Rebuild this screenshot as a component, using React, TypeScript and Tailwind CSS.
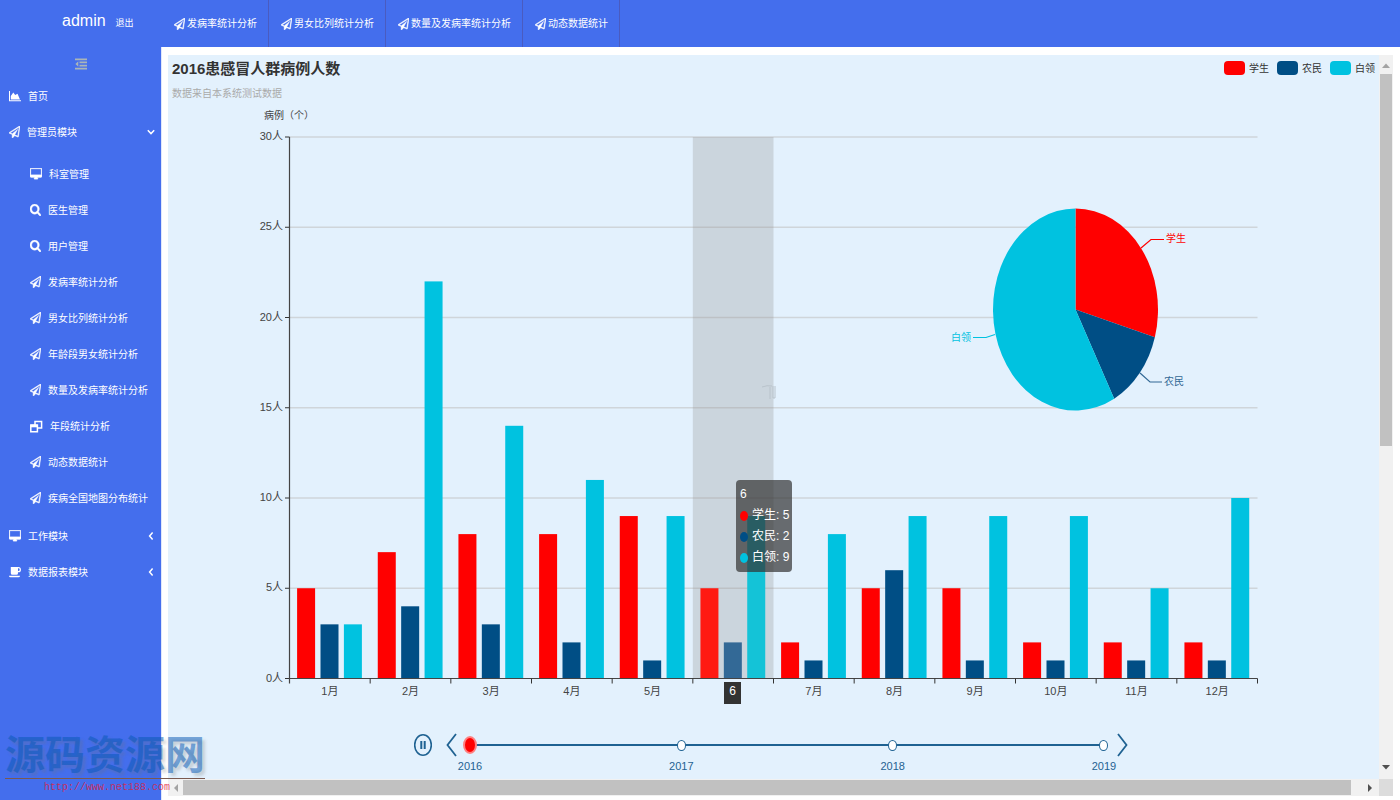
import type { ReactNode } from "react";

type IconProps = { className?: string };

function PlaneIcon({ className = "h-3 w-[11px]" }: IconProps) {
  return (
    <svg className={className} viewBox="0 0 1792 1792" preserveAspectRatio="none" fill="currentColor" stroke="currentColor" strokeWidth="70" aria-hidden="true">
      <path d="M1764 11q33 24 27 64l-256 1536q-5 29-32 45-14 8-31 8-11 0-24-5l-527-215-298 327q-18 21-47 21-14 0-23-4-19-7-30-23.5t-11-36.5v-452l-472-193q-37-14-40-55-3-39 32-59l1664-960q35-21 68 2zm-342 1499l221-1323-1434 827 336 137 863-639-478 797z" />
    </svg>
  );
}

function DesktopIcon({ className = "h-3 w-3" }: IconProps) {
  return (
    <svg className={className} viewBox="0 0 1920 1792" preserveAspectRatio="none" fill="currentColor" stroke="currentColor" strokeWidth="50" aria-hidden="true">
      <path d="M1792 992v-832q0-13-9.5-22.5t-22.5-9.5h-1600q-13 0-22.5 9.5t-9.5 22.5v832q0 13 9.5 22.5t22.5 9.5h1600q13 0 22.5-9.5t9.5-22.5zm128-832v1088q0 66-47 113t-113 47h-544q0 37 16 77.5t32 71 16 43.5q0 26-19 45t-45 19h-512q-26 0-45-19t-19-45q0-14 16-44t32-70 16-78h-544q-66 0-113-47t-47-113v-1088q0-66 47-113t113-47h1600q66 0 113 47t47 113z" />
    </svg>
  );
}

function SearchIcon({ className = "h-3 w-[11px]" }: IconProps) {
  return (
    <svg className={className} viewBox="64 128 1664 1664" preserveAspectRatio="none" fill="currentColor" stroke="currentColor" strokeWidth="60" aria-hidden="true">
      <path d="M1216 832q0-185-131.5-316.5t-316.5-131.5-316.5 131.5-131.5 316.5 131.5 316.5 316.5 131.5 316.5-131.5 131.5-316.5zm512 832q0 52-38 90t-90 38q-54 0-90-38l-343-342q-179 124-399 124-143 0-273.5-55.5t-225-150-150-225-55.5-273.5 55.5-273.5 150-225 225-150 273.5-55.5 273.5 55.5 225 150 150 225 55.5 273.5q0 220-124 399l343 343q37 37 37 90z" />
    </svg>
  );
}

function AreaIcon({ className = "h-3 w-3" }: IconProps) {
  return (
    <svg className={className} viewBox="0 0 12 12" fill="currentColor" aria-hidden="true">
      <path d="M0 1h1v9.2h11v1H0zM1.8 9.5V6L4.3 2.6 6.2 5l2.3-1.2L11 9.5z" />
    </svg>
  );
}

function CloneIcon({ className = "h-[13px] w-[13px]" }: IconProps) {
  return (
    <svg className={className} viewBox="0 0 13 13" fill="none" stroke="currentColor" aria-hidden="true">
      <path d="M5 5V1.5h6.600v6.600H8" strokeWidth="1.500" />
      <path d="M.8 5h6.600v6.800H.8z" strokeWidth="1.500" />
      <path d="M.8 6h6.600" strokeWidth="2.600" />
    </svg>
  );
}

function CoffeeIcon({ className = "h-3 w-3" }: IconProps) {
  return (
    <svg className={className} viewBox="0 0 12 12" fill="currentColor" aria-hidden="true">
      <path d="M1.8 1H9.4a2.5 2.6 0 0 1 0 5.3H9V7.2q0 1.6-1.5 1.6H3.4Q1.8 8.8 1.8 7.2zM9 2.3v2.7h.4a1.3 1.35 0 0 0 0-2.7z" fillRule="evenodd" />
      <path d="M0 9.7h11q0 1.5-1.5 1.5h-8Q0 11.2 0 9.7z" />
    </svg>
  );
}

function OutdentIcon() {
  return (
    <svg className="h-3 w-3" viewBox="0 0 12 12" fill="currentColor" aria-hidden="true">
      <path d="M0 .5h12v1.7H0zM4.5 3.6H12v1.7H4.5zM4.5 6.7H12v1.7H4.5zM0 9.8h12v1.7H0zM3.3 3.3v5.4L.4 6z" />
    </svg>
  );
}

function Chevron({ open }: { open?: boolean }) {
  return (
    <svg className="h-2 w-2" viewBox="0 0 8 8" fill="none" stroke="currentColor" strokeWidth="1.5" aria-hidden="true">
      <path d={open ? "M.8 2.2L4 5.6 7.2 2.2" : "M5.6.6L2.6 4l3 3.4"} />
    </svg>
  );
}

const tabs = ["发病率统计分析", "男女比列统计分析", "数量及发病率统计分析", "动态数据统计"];

const subItems: { label: string; icon: ReactNode }[] = [
  { label: "科室管理", icon: <DesktopIcon /> },
  { label: "医生管理", icon: <SearchIcon /> },
  { label: "用户管理", icon: <SearchIcon /> },
  { label: "发病率统计分析", icon: <PlaneIcon /> },
  { label: "男女比列统计分析", icon: <PlaneIcon /> },
  { label: "年龄段男女统计分析", icon: <PlaneIcon /> },
  { label: "数量及发病率统计分析", icon: <PlaneIcon /> },
  { label: "年段统计分析", icon: <CloneIcon /> },
  { label: "动态数据统计", icon: <PlaneIcon /> },
  { label: "疾病全国地图分布统计", icon: <PlaneIcon /> },
];

function TopBar() {
  return (
    <header className="flex h-[47px] shrink-0 bg-[#446eed] text-white">
      <div className="flex w-[161px] shrink-0 items-baseline pl-[62px] pt-[9px]">
        <span className="text-[16px] leading-6">admin</span>
        <a href="#logout" className="ml-[10px] text-[9px]">
          退出
        </a>
      </div>
      <nav className="flex pl-px">
        {tabs.map((t) => (
          <a
            key={t}
            href="#tab"
            className="flex items-center gap-[2px] whitespace-nowrap border-r border-[#4a5bc0] pl-3 pr-[11px] text-[10px]"
          >
            <PlaneIcon />
            {t}
          </a>
        ))}
      </nav>
    </header>
  );
}

function MenuRow({ icon, label, arrow }: { icon: ReactNode; label: string; arrow?: ReactNode }) {
  return (
    <a href="#menu" className="flex h-9 items-center gap-[7px] pl-[9px] pr-[6px]">
      {icon}
      <span className="flex-1 whitespace-nowrap">{label}</span>
      {arrow}
    </a>
  );
}

function Sidebar() {
  return (
    <aside className="w-[161px] shrink-0 bg-[#446eed] text-[10px] text-white">
      <div className="flex h-[31px] items-center justify-center pt-[3px]">
        <button type="button" aria-label="菜单" className="text-[#aab5b8]">
          <OutdentIcon />
        </button>
      </div>
      <nav>
        <MenuRow icon={<AreaIcon />} label="首页" />
        <MenuRow icon={<PlaneIcon />} label="管理员模块" arrow={<Chevron open />} />
        <ul className="pb-[2px] pt-[6px]">
          {subItems.map((s) => (
            <li key={s.label}>
              <a href="#item" className="flex h-9 items-center gap-[7px] whitespace-nowrap pl-[30px]">
                {s.icon}
                {s.label}
              </a>
            </li>
          ))}
        </ul>
        <MenuRow icon={<DesktopIcon />} label="工作模块" arrow={<Chevron />} />
        <MenuRow icon={<CoffeeIcon />} label="数据报表模块" arrow={<Chevron />} />
      </nav>
    </aside>
  );
}

const series = [
  { name: "学生", color: "#ff0000", hover: "#ff1a12", values: [5, 7, 8, 8, 9, 5, 2, 5, 5, 2, 2, 2] },
  { name: "农民", color: "#004e85", hover: "#336996", values: [3, 4, 3, 2, 1, 2, 1, 6, 1, 1, 1, 1] },
  { name: "白领", color: "#00c2e0", hover: "#14c3d7", values: [3, 22, 14, 11, 9, 9, 8, 9, 9, 9, 5, 10] },
];

const swatches = ["bg-[#ff0000]", "bg-[#004e85]", "bg-[#00c2e0]"];

const LEFT = 121.5;
const RIGHT = 1089.5;
const TOP = 32;
const BASE = 573.5;
const STEP = (RIGHT - LEFT) / 12;
const UNIT = (BASE - TOP) / 30;
const ACTIVE = 5;
const months = Array.from({ length: 12 }, (_, i) => i);

const PIE = { x: 907.5, y: 204.5, rx: 82.5, ry: 101 };

function slice(from: number, to: number) {
  const at = (f: number) => {
    const a = f * Math.PI * 2;
    return `${(PIE.x + PIE.rx * Math.sin(a)).toFixed(2)} ${(PIE.y - PIE.ry * Math.cos(a)).toFixed(2)}`;
  };
  return `M${PIE.x} ${PIE.y}L${at(from)}A${PIE.rx} ${PIE.ry} 0 ${to - from > 0.5 ? 1 : 0} 1 ${at(to)}Z`;
}

function Chart() {
  return (
    <svg viewBox="0 0 1211 610" className="block h-auto w-full" fontSize="11" role="img" aria-label="病例">
      <text x="96" y="14" fill="#444" fontSize="10">
        病例（个）
      </text>
      {[0, 5, 10, 15, 20, 25, 30].map((v) => {
        const y = BASE - v * UNIT;
        return (
          <g key={v}>
            {v > 0 && <path d={`M${LEFT} ${y}H${RIGHT}`} stroke="#cfd5da" strokeWidth="1.6" />}
            <path d={`M117 ${y}H${LEFT}`} stroke="#333" />
            <text x="115" y={y + 3} textAnchor="end" fill="#444">
              {v}人
            </text>
          </g>
        );
      })}
      <rect x={LEFT + ACTIVE * STEP} y={TOP} width={STEP} height={BASE - TOP} fill="#969696" fillOpacity=".3" />
      <path d="M594 282q5-2 10-1M602 282v12M605 281v12h2v-12" stroke="#b9c3cb" fill="none" />
      {series.map((s, k) =>
        s.values.map((v, i) => (
          <rect
            key={`${s.name}${i}`}
            x={LEFT + i * STEP + 7.6 + k * 23.4}
            y={BASE - v * UNIT}
            width="18"
            height={v * UNIT}
            fill={i === ACTIVE ? s.hover : s.color}
          />
        )),
      )}
      <path d={`M${LEFT} ${TOP}V${BASE + 5}M${LEFT} ${BASE}H${RIGHT}`} stroke="#444" strokeWidth="1.2" fill="none" />
      {months.map((i) => (
        <g key={i}>
          <path d={`M${LEFT + (i + 1) * STEP} ${BASE}v5`} stroke="#333" />
          {i !== ACTIVE && (
            <text x={LEFT + (i + 0.5) * STEP} y={BASE + 16} textAnchor="middle" fill="#444">
              {i + 1}月
            </text>
          )}
        </g>
      ))}
      <rect x="556" y="577" width="17" height="22" fill="#333" />
      <text x="564.5" y="590" textAnchor="middle" fill="#fff" fontSize="12">
        6
      </text>
      <path d={slice(0, 0.2941)} fill="#ff0000" />
      <path d={slice(0.2941, 0.4223)} fill="#004e85" />
      <path d={slice(0.4223, 1)} fill="#00c2e0" />
      <g fill="none" strokeWidth="1.2">
        <path d="M973 143l10-8.500h13" stroke="#ff0000" />
        <path d="M972 268l10 9h12" stroke="#336996" />
        <path d="M827 229.500l-9 3h-13" stroke="#00c2e0" />
      </g>
      <g fontSize="10">
        <text x="998" y="137" fill="#ff0000">学生</text>
        <text x="996" y="280" fill="#336996">农民</text>
        <text x="783" y="236" fill="#00c2e0">白领</text>
      </g>
    </svg>
  );
}

function Tooltip() {
  return (
    <div className="absolute left-[46.9%] top-[61.5%] whitespace-nowrap rounded bg-[#323232]/70 py-1 pl-1 pr-[3px] text-[12px] leading-[21px] text-white">
      <div>6</div>
      {series.map((s, k) => (
        <div key={s.name} className="flex items-center gap-1">
          <span className={`h-[10px] w-2 rounded-[50%] ${swatches[k]}`} />
          {s.name}: {s.values[ACTIVE]}
        </div>
      ))}
    </div>
  );
}

function Timeline() {
  return (
    <div className="flex items-start pl-[246px] pr-[251px] pt-5 text-[#1f6292]">
      <button type="button" aria-label="暂停" className="mr-3 flex h-5 w-5 shrink-0 items-center">
        <svg className="h-[22px] w-[18px] shrink-0" viewBox="0 0 18 22" fill="none" stroke="currentColor" aria-hidden="true">
          <ellipse cx="9" cy="11" rx="8.3" ry="10.2" strokeWidth="1.6" />
          <path d="M7.3 7v8M10.7 7v8" strokeWidth="2" />
        </svg>
      </button>
      <button type="button" aria-label="上一年" className="flex h-5 w-3 shrink-0 items-center">
        <svg className="h-6 w-3 shrink-0" viewBox="0 0 12 24" fill="none" stroke="currentColor" strokeWidth="1.8" aria-hidden="true">
          <path d="M10 1L1.5 12 10 23" />
        </svg>
      </button>
      <div className="relative flex flex-1 justify-between">
        <div className="absolute left-3 right-3 top-[9px] h-[2px] bg-[#1f6292]" />
        {[2016, 2017, 2018, 2019].map((y, i) => (
          <button key={y} type="button" className="relative flex w-6 flex-col items-center">
            <span className="flex h-5 items-center">
              {i === 0 ? (
                <span className="h-[18px] w-[14px] rounded-[50%] border-2 border-[#ff8080] bg-[#ff0000]" />
              ) : (
                <span className="h-[11px] w-[9px] rounded-[50%] border border-[#1f6292] bg-white" />
              )}
            </span>
            <span className="text-[11px] leading-[22px]">{y}</span>
          </button>
        ))}
      </div>
      <button type="button" aria-label="下一年" className="flex h-5 w-3 shrink-0 items-center">
        <svg className="h-6 w-3 shrink-0" viewBox="0 0 12 24" fill="none" stroke="currentColor" strokeWidth="1.8" aria-hidden="true">
          <path d="M2 1l8.5 11L2 23" />
        </svg>
      </button>
    </div>
  );
}

function Arrow({ d, color }: { d: string; color: string }) {
  return (
    <svg className="h-2 w-2 shrink-0" viewBox="0 0 8 8" fill={color} aria-hidden="true">
      <path d={d} />
    </svg>
  );
}

function Report() {
  return (
    <main className="flex min-w-0 flex-1 flex-col border-l border-[#dfe6fb] bg-white pb-1 pl-[6px] pr-[7px] pt-2">
      <div className="flex min-h-0 flex-1">
        <section className="min-w-0 flex-1 overflow-hidden bg-[#e3f1fd]">
          <div className="flex justify-between pl-1 pr-1">
            <div>
              <h1 className="text-[15px] font-bold leading-7 text-[#333]">2016患感冒人群病例人数</h1>
              <p className="text-[10px] leading-[22px] text-[#aaa]">数据来自本系统测试数据</p>
            </div>
            <div className="flex h-[26px] items-center gap-2 text-[10px] text-[#333]">
              {series.map((s, k) => (
                <button key={s.name} type="button" className="flex items-center gap-1">
                  <span className={`h-[14px] w-[21px] rounded ${swatches[k]}`} />
                  {s.name}
                </button>
              ))}
            </div>
          </div>
          <div className="relative">
            <Chart />
            <Tooltip />
          </div>
          <Timeline />
        </section>
        <div className="flex w-[14px] shrink-0 flex-col items-center bg-[#f1f1f1]">
          <div className="flex h-[19px] items-center pt-[2px]">
            <Arrow d="M0 6l4-4.500L8 6z" color="#a3a3a3" />
          </div>
          <div className="h-[51.4%] w-3 bg-[#c1c1c1]" />
          <div className="mt-auto flex h-6 items-center">
            <Arrow d="M0 2h8L4 6.500z" color="#505050" />
          </div>
        </div>
      </div>
      <div className="flex h-[17px] shrink-0 bg-[#f1f1f1]">
        <div className="flex w-[15px] items-center justify-center">
          <Arrow d="M6 0v8L2 4z" color="#a3a3a3" />
        </div>
        <div className="my-px flex-1 bg-[#c1c1c1]" />
        <div className="flex w-7 items-center justify-end pr-[5px]">
          <Arrow d="M2 0v8l4-4z" color="#505050" />
        </div>
        <div className="w-[14px] bg-[#dcdcdc]" />
      </div>
    </main>
  );
}

function SiteMark() {
  return (
    <div className="pointer-events-none absolute bottom-[4px] left-[5px] w-[200px]">
      <div className="whitespace-nowrap border-b border-[#7a5a50] text-[40px] font-bold leading-[46px] text-[#0658b4]/50 [text-shadow:3px_3px_3px_rgba(110,110,110,0.25)]">
        源码资源网
      </div>
      <div className="pl-[39px] font-['Liberation_Mono',monospace] text-[10px] leading-[17px] text-[#e0203a]/80">http://www.net188.com</div>
    </div>
  );
}

export default function App() {
  return (
    <div className="relative flex h-screen flex-col overflow-hidden bg-white font-['Liberation_Sans','Noto_Sans_CJK_SC',sans-serif]">
      <TopBar />
      <div className="flex min-h-0 flex-1">
        <Sidebar />
        <Report />
      </div>
      <SiteMark />
    </div>
  );
}
